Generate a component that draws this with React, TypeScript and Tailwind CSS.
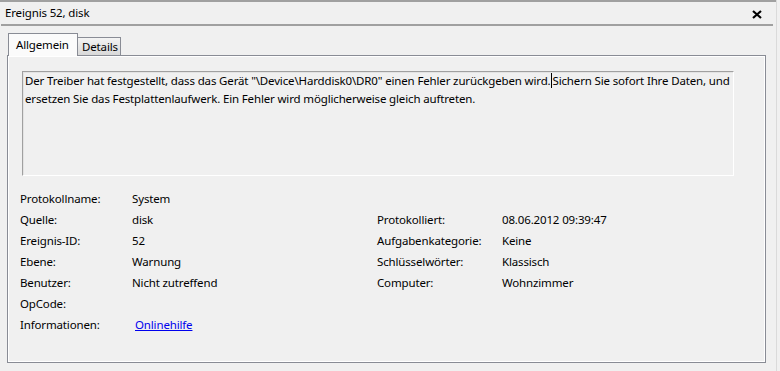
import React from "react";

const font = { fontFamily: '"Noto Sans", "Open Sans", sans-serif' };

function Row({ l1, v1, l2, v2, link }: { l1: string; v1?: string; l2?: string; v2?: string; link?: boolean }) {
  return (
    <div className="grid grid-cols-[112px_245px_125px_1fr] h-[21px] items-center">
      <div>{l1}</div>
      <div>
        {link ? (
          <span className="ml-[3px] text-[#0000ee] underline">{v1}</span>
        ) : (
          v1
        )}
      </div>
      <div>{l2}</div>
      <div>{v2}</div>
    </div>
  );
}

export default function App() {
  return (
    <div
      className="w-[780px] h-[371px] bg-[#f0f0f0] text-[11.5px] tracking-[-0.15px] text-black flex overflow-hidden"
      style={font}
    >
      <div className="w-[776px] flex flex-col border-t-2 border-[#a0a0a0]">
        <div className="h-[22px] flex items-center justify-between pl-[5px] pr-[14px]">
          <span className="leading-none">Ereignis 52, disk</span>
          <svg width="10" height="9" viewBox="0 0 10 9" className="mt-[2px]">
            <path d="M1 1 L9 8 M9 1 L1 8" stroke="#000" strokeWidth="2.2" />
          </svg>
        </div>
        <div className="ml-[1px] w-[772px] h-[2px] bg-[#a0a0a0]" />
        <div className="flex items-end ml-[8px] mt-[7px] h-[23px] relative z-10">
          <div className="w-[70px] h-[23px] bg-[#fbfbfb] border border-b-0 border-[#898c95] pl-[7px] pt-[2px]">
            Allgemein
          </div>
          <div className="w-[44px] h-[19px] -ml-[1px] bg-gradient-to-b from-[#f3f3f3] to-[#d9d9d9] border border-[#898c95] pl-[4px] leading-[17px]">
            Details
          </div>
        </div>
        <div className="ml-[7px] w-[759px] h-[308px] -mt-[1px] border border-[#898c95] shadow-[inset_1px_1px_0_#fff,inset_-1px_-1px_0_#fff] pt-[15px] pl-[14px]">
          <div className="w-[712px] h-[105px] border border-[#a0a0a0] border-r-white border-b-white shadow-[inset_1px_1px_0_#e3e3e3] pl-[2px] pt-0 leading-[18px] whitespace-nowrap">
            <div>
              Der Treiber hat festgestellt, dass das Gerät "\Device\Harddisk0\DR0" einen Fehler zurückgeben wird.
              <span className="inline-block w-[1px] h-[15px] bg-black align-middle -mt-[2px] mr-[1px]" />
              Sichern Sie sofort Ihre Daten, und
            </div>
            <div>ersetzen Sie das Festplattenlaufwerk. Ein Fehler wird möglicherweise gleich auftreten.</div>
          </div>
          <div className="mt-[12px] -ml-[2px]">
            <Row l1="Protokollname:" v1="System" />
            <Row l1="Quelle:" v1="disk" l2="Protokolliert:" v2="08.06.2012 09:39:47" />
            <Row l1="Ereignis-ID:" v1="52" l2="Aufgabenkategorie:" v2="Keine" />
            <Row l1="Ebene:" v1="Warnung" l2="Schlüsselwörter:" v2="Klassisch" />
            <Row l1="Benutzer:" v1="Nicht zutreffend" l2="Computer:" v2="Wohnzimmer" />
            <Row l1="OpCode:" />
            <Row l1="Informationen:" v1="Onlinehilfe" link />
          </div>
        </div>
      </div>
      <div className="w-[1px] h-full bg-[#dadada]" />
    </div>
  );
}
